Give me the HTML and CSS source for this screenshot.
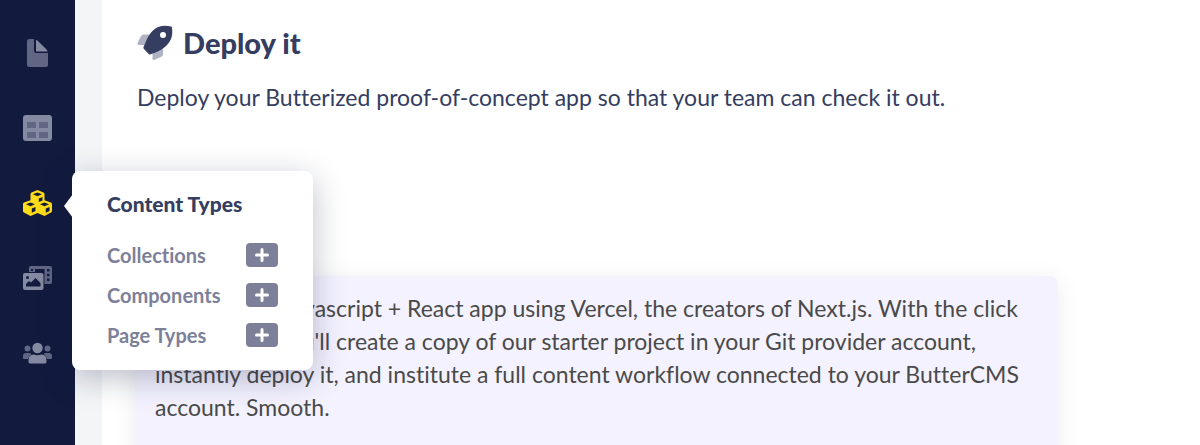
FILE: index.html
```html
<!DOCTYPE html>
<html lang="en">
<head>
    <meta charset="UTF-8">
    <meta name="viewport" content="width=device-width, initial-scale=1.0">
    <title>Deploy it</title>
    <link rel="stylesheet" href="styles.css">
</head>
<body>
    <nav class="sidebar">
        <div class="nav-item">
            <a href="#pages" class="nav-link" aria-label="Pages">
                <svg width="21" height="28" viewBox="0 0 21 28">
                    <path fill="#616685" d="M2.500 0H7v12q0 2 2 2h12v11.500a2.500 2.500 0 0 1-2.500 2.500h-16A2.500 2.500 0 0 1 0 25.500v-23A2.500 2.500 0 0 1 2.500 0z"/>
                    <path fill="#858aa3" d="M9 1q1 0 2 1l8.500 8.500q1 1 1 2H9z"/>
                </svg>
            </a>
        </div>
        <div class="nav-item">
            <a href="#collections" class="nav-link" aria-label="Collections">
                <svg width="30" height="26" viewBox="0 0 30 26">
                    <rect width="29" height="26" rx="3" fill="#858aa3"/>
                    <path fill="#616685" d="M4 7h9v6H4zM16 7h9v6h-9zM4 17h9v6H4zM16 17h9v6h-9z"/>
                </svg>
            </a>
        </div>
        <div class="nav-item">
            <a href="#content-types" class="nav-link" aria-label="Content Types">
                <svg width="30" height="28" viewBox="0 0 30 28">
                    <path fill="#ffdc18" d="M14.500 1l6 2.500q1 .5 1 1.500v6.200L28 13.500q1 .5 1 1.500v7q0 1-1 1.500L21.500 27l-7-3-7 3L1 23.500q-1-.5-1-1.500v-7q0-1 1-1.500l6.500-2.300V5q0-1 1-1.500z"/>
                    <path fill="#121a3e" d="M14.500 3.500l4.500 1.800-4.500 2-4.500-2zM7.500 13.500l4.500 1.800-4.500 2-4.500-2zM21.500 13.500l4.500 1.800-4.500 2-4.500-2zM15.800 9.500l3.700-1.600v3.600l-3.700 1.600zM8.800 19.500l3.700-1.600v4l-3.700 1.800zM22.800 19.500l3.700-1.600v4l-3.700 1.800z"/>
                </svg>
            </a>
            <section class="popover">
                <h2 class="popover-title">Content Types</h2>
                <ul class="type-list">
                    <li class="type-row">
                        <a href="#collections" class="type-link">Collections</a>
                        <button type="button" class="add" aria-label="Add collection">
                            <svg width="14" height="14" viewBox="0 0 14 14"><path d="M7 1.500v11M1.500 7h11"/></svg>
                        </button>
                    </li>
                    <li class="type-row">
                        <a href="#components" class="type-link">Components</a>
                        <button type="button" class="add" aria-label="Add component">
                            <svg width="14" height="14" viewBox="0 0 14 14"><path d="M7 1.500v11M1.500 7h11"/></svg>
                        </button>
                    </li>
                    <li class="type-row">
                        <a href="#page-types" class="type-link">Page Types</a>
                        <button type="button" class="add" aria-label="Add page type">
                            <svg width="14" height="14" viewBox="0 0 14 14"><path d="M7 1.500v11M1.500 7h11"/></svg>
                        </button>
                    </li>
                </ul>
            </section>
        </div>
        <div class="nav-item">
            <a href="#media" class="nav-link" aria-label="Media">
                <svg width="30" height="24" viewBox="0 0 30 24">
                    <rect x="6" width="23" height="18" rx="2" fill="#616685"/>
                    <path fill="#121a3e" d="M12 3h9.500v5H12zM8 3h2v2H8zM24 3h2.500v2.500H24zM24 7.800h2.500v2.500H24zM24 12.600h2.500v2.500H24z"/>
                    <rect x="-1" y="6" width="22.500" height="19" rx="2" fill="#121a3e"/>
                    <rect y="7" width="20.500" height="17" rx="2" fill="#858aa3"/>
                    <path fill="#121a3e" d="M3 20.500v-2.500l3-3 2 1.500 4.500-4.500 5 5v3.500z"/>
                    <circle cx="4.500" cy="11.500" r="1.500" fill="#121a3e"/>
                </svg>
            </a>
        </div>
        <div class="nav-item">
            <a href="#users" class="nav-link" aria-label="Users">
                <svg width="30" height="22" viewBox="0 0 30 22">
                    <g fill="#616685">
                        <circle cx="4.500" cy="6.500" r="3"/>
                        <circle cx="24.500" cy="6.500" r="3"/>
                        <path d="M3 11h3q1.500 0 2.500 1-3 2-3.500 5H1q-1 0-1-1v-2q0-3 3-3zM26 11h-3q-1.500 0-2.500 1 3 2 3.500 5h4q1 0 1-1v-2q0-3-3-3z"/>
                    </g>
                    <g fill="#858aa3">
                        <circle cx="14.500" cy="6" r="5.200"/>
                        <path d="M10.500 12.500q4 1.500 8 0 5 0 5 6v1.500q0 1.500-2 1.500h-14q-2 0-2-1.500v-1.500q0-6 5-6z"/>
                    </g>
                </svg>
            </a>
        </div>
    </nav>

    <main class="content">
        <h1 class="title">
            <svg width="36" height="36" viewBox="0 0 36 36" aria-hidden="true">
                <path fill="#afb2c2" d="M13 9.500H6.500Q5 9.500 4 11L.5 18Q0 20 1.500 20H9zM26 23v6.500q0 1.500-1.500 2.200L17 35q-1.500.3-1.500-1V27z"/>
                <path fill="#353d60" fill-rule="evenodd" d="M34 1.500q.8 0 .9.800C36 9 35 15 30 20c-3 3-7 5.500-11.500 7.500l-5 1.800q-1 .5-2-.5L7 24q-1-1-.5-2l2-4.500C10.500 12.500 13 8 16.500 5 21.500.5 27.500 0 34 1.500zM26 7a3 3 0 1 0 0 6 3 3 0 0 0 0-6z"/>
            </svg>
            Deploy it
        </h1>
        <p class="lead">Deploy your Butterized proof-of-concept app so that your team can check it out.</p>
        <div class="card">
            <p class="card-text">Deploy your Javascript + React app using Vercel, the creators of Next.js. With the click<br>
            of a button, you'll create a copy of our starter project in your Git provider account,<br>
            instantly deploy it, and institute a full content workflow connected to your ButterCMS<br>
            account. Smooth.</p>
        </div>
    </main>
</body>
</html>
```

FILE: styles.css
```css
* {
    box-sizing: border-box;
}

body {
    background-color: #f3f5f7;
    display: flex;
    font-family: Lato, sans-serif;
    font-variant-ligatures: none;
    margin: 0;
    min-height: 100vh;
}

.sidebar {
    background-color: #121a3e;
    flex: none;
    padding-top: 15px;
    width: 75px;
}

.nav-item {
    position: relative;
}

.nav-link {
    align-items: center;
    display: flex;
    height: 75px;
    justify-content: center;
}

/* Flyout menu next to the active icon */
.popover {
    background-color: #fff;
    border-radius: 8px;
    box-shadow: 0 8px 32px rgba(18, 26, 62, 0.28);
    left: 72px;
    padding: 19px 35px 15px;
    position: absolute;
    top: 6px;
    width: 241px;
    z-index: 1;
}

.popover::before {
    border: 12px solid transparent;
    border-left-width: 0;
    border-right: 9px solid #fff;
    content: "";
    left: -8px;
    position: absolute;
    top: 23px;
}

.popover-title {
    color: #353d60;
    font-size: 21px;
    font-weight: 900;
    line-height: 28px;
    margin: 0 0 17px;
}

.type-list {
    list-style: none;
    margin: 0;
    padding: 0;
}

.type-row {
    align-items: center;
    display: flex;
    height: 40px;
    justify-content: space-between;
}

.type-link {
    color: #7c8099;
    font-size: 20px;
    font-weight: 700;
    text-decoration: none;
}

.add {
    align-items: center;
    background-color: #7c8099;
    border: 0;
    border-radius: 4px;
    cursor: pointer;
    display: flex;
    height: 24px;
    justify-content: center;
    padding: 0;
    width: 32px;
}

.add path {
    fill: none;
    stroke: #fff;
    stroke-linecap: round;
    stroke-width: 3;
}

.content {
    background-color: #fff;
    color: #353d60;
    flex: 1;
    height: 100vh;
    margin-left: 27px;
    overflow: hidden;
    padding: 24px 142px 0 33px;
}

.title {
    align-items: center;
    display: flex;
    font-size: 29px;
    font-weight: 900;
    gap: 10px;
    line-height: 38px;
    margin: 0 0 0 2px;
}

.lead {
    font-size: 23px;
    line-height: 33px;
    margin: 19px 0 162px 2px;
    white-space: nowrap;
}

.card {
    background-color: #f4f2ff;
    border-radius: 8px;
    box-shadow: 0 4px 24px rgba(18, 26, 62, 0.08);
    min-height: 200px;
    padding: 16px 20px;
}

.card-text {
    color: #4a4a4a;
    font-size: 23px;
    line-height: 33px;
    margin: 0;
    white-space: nowrap;
}
```
